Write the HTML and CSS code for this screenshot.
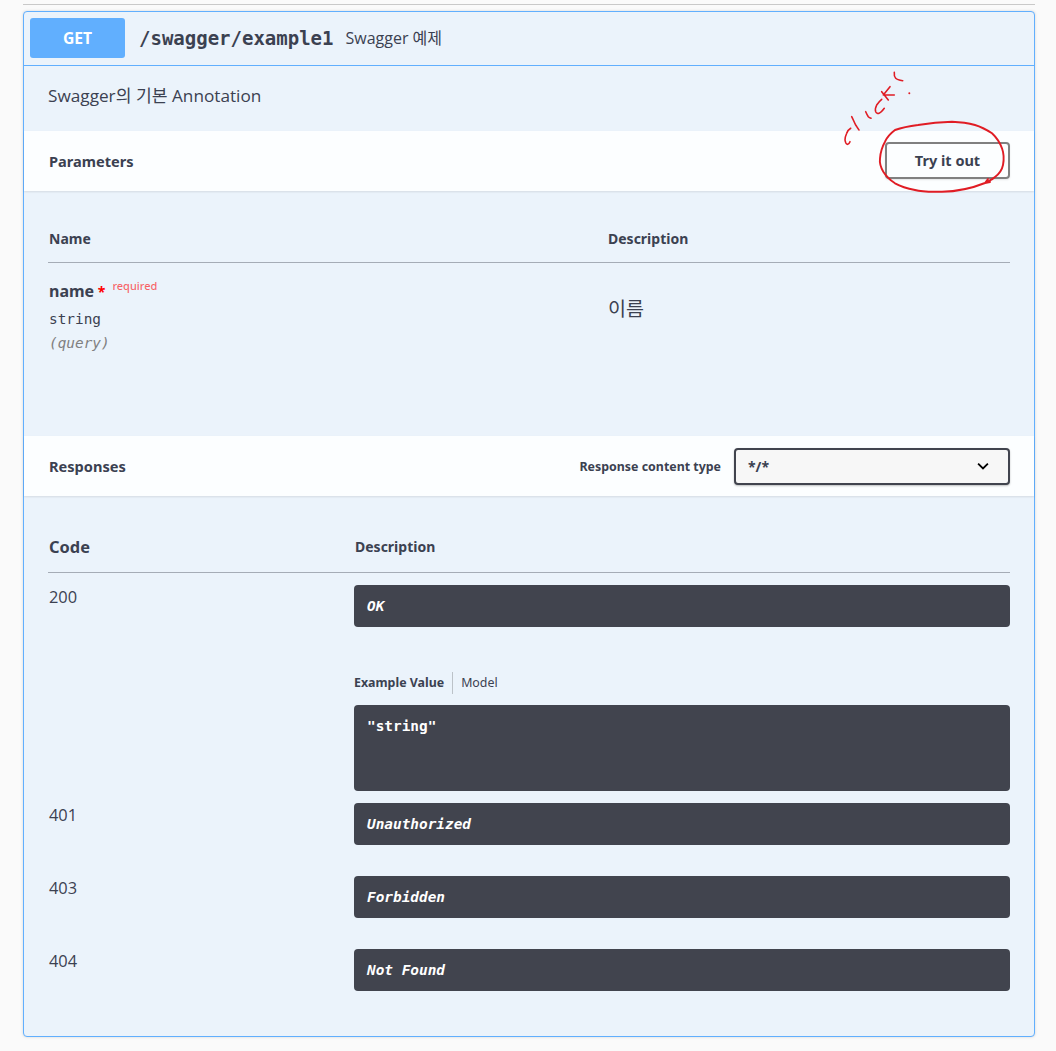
FILE: index.html
```html
<!DOCTYPE html>
<html lang="en">
<head>
  <meta charset="UTF-8" />
  <title>Swagger UI</title>
  <link rel="stylesheet" href="styles.css">
</head>
<body>
  <div class="top-line"></div>

  <div class="opblock">
    <!-- Summary -->
    <div class="summary">
      <span class="method">GET</span>
      <span class="path">/swagger/example1</span>
      <span class="summary-desc">Swagger 예제</span>
    </div>

    <div class="op-desc">Swagger의 기본 Annotation</div>

    <!-- Parameters -->
    <div class="section-head head-params">
      <h4>Parameters</h4>
      <button class="btn-try">Try it out</button>
    </div>

    <div class="params">
      <div class="param-cols">
        <div class="col-name">Name</div>
        <div class="col-desc">Description</div>
      </div>
      <div class="param-row">
        <div class="col-name">
          <div class="param-name">name<span class="star"> *</span><span class="req">required</span></div>
          <div class="param-type">string</div>
          <div class="param-in">(query)</div>
        </div>
        <div class="col-desc param-text">이름</div>
      </div>
    </div>

    <!-- Responses -->
    <div class="section-head head-resp">
      <h4>Responses</h4>
      <label class="content-type">
        <span>Response content type</span>
        <span class="select">
          <span>*/*</span>
          <svg width="14" height="14" viewBox="0 0 20 20"><path d="M3 6.5 L10 13.5 L17 6.5" fill="none" stroke="#000" stroke-width="2.6"/></svg>
        </span>
      </label>
    </div>

    <div class="responses">
      <div class="resp-cols">
        <div class="col-code">Code</div>
        <div class="col-resp">Description</div>
      </div>

      <div class="resp-row first">
        <div class="col-code code">200</div>
        <div class="col-resp">
          <div class="msg">OK</div>
          <div class="tabs">
            <span class="tab active">Example Value</span>
            <span class="tab">Model</span>
          </div>
          <pre class="example">"string"</pre>
        </div>
      </div>

      <div class="resp-row">
        <div class="col-code code">401</div>
        <div class="col-resp"><div class="msg">Unauthorized</div></div>
      </div>
      <div class="resp-row">
        <div class="col-code code">403</div>
        <div class="col-resp"><div class="msg">Forbidden</div></div>
      </div>
      <div class="resp-row">
        <div class="col-code code">404</div>
        <div class="col-resp"><div class="msg">Not Found</div></div>
      </div>
    </div>
  </div>

  <!-- Red pen notes on top of the page -->
  <svg class="scribble" width="1056" height="1051" viewBox="0 0 1056 1051">
    <g fill="none" stroke="#e01c24" stroke-linecap="round" stroke-linejoin="round">
      <path stroke-width="1.9" d="M985 183 C975 187 960 191.5 942 191.7 C930 192 920 191.5 915 190 C905 188 900 186 895 183.3 C890 180 886 176 883.3 171.7 C880 166 879.5 162 880 158.3 C880.5 152 882 147 885 141.7 C887 137 891 133 895 130 C902 127.5 910 126 918 125 C930 123 940 122 952 121.7 C960 122 968 123 975 125 C982 127 987 130 992 133.3 C997 138 1000 143 1002 148.3 C1004 154 1004 160 1003 165 C1002 170 999 174 995 177 C992 180 988 181 985 183 L988 179 M985 183 L990 182"/>
      <path stroke-width="1.6" d="M850.7 128.3 C848 130 847 132 846.7 133.3 C845.5 136 844.7 138 845 140 C845.3 142 846 144 847.3 144.3 C848.5 144.5 849.5 143 850 141.7"/>
      <path stroke-width="1.6" d="M851.7 116.7 C853 119 854 122 855.7 125 C857 127 858 129 859 130"/>
      <path stroke-width="1.6" d="M865.7 111.7 C866.5 113.5 867.5 115.5 868.3 116.7 C869 117.5 870 118 871 118.3"/>
      <path stroke-width="1.6" d="M881.7 99.3 C879.5 101 878 103 876.7 105 C875.5 107.5 875 110 875.7 111.7 C876.5 113.5 878 113.8 879 113.3 C881 112.5 883 110 884.3 108.3"/>
      <path stroke-width="1.6" d="M881.7 91.7 L888.3 100 M890 86.7 L883.3 95 L894.3 95"/>
      <path stroke-width="1.6" d="M894.3 72.3 C894 75 894.5 77 895.7 78.3 C897 79.7 900 80.3 902.7 80.7"/>
      <circle cx="909.3" cy="93.3" r="1" fill="#e01c24" stroke="none"/>
    </g>
  </svg>
</body>
</html>
```

FILE: styles.css
```css
* { margin: 0; padding: 0; box-sizing: border-box; }

html, body {
  background: #fafafa;
  font-family: 'Open Sans', 'Noto Sans CJK KR', sans-serif;
  color: #3b4151;
}

body {
  position: relative;
  width: 1056px;
  height: 1051px;
  overflow: hidden;
  padding: 4px 21px 0 23px;
}

.top-line {
  height: 1px;
  background: #c9c9c9;
  margin-bottom: 6px;
}

.opblock {
  height: 1026px;
  background: #ebf3fb;
  border: 1px solid #61affe;
  border-radius: 4px;
  box-shadow: 0 0 3px rgba(0, 0, 0, 0.15);
}

.summary {
  height: 54px;
  display: flex;
  align-items: flex-start;
  padding: 6px 6px 0;
  border-bottom: 1px solid #61affe;
}

.method {
  width: 95px;
  height: 40px;
  background: #61affe;
  border-radius: 3px;
  color: #fff;
  font: 700 15.7px 'Noto Sans', sans-serif;
  display: flex;
  align-items: center;
  justify-content: center;
}

.path {
  margin-left: 14px;
  font: 700 19px/40px 'DejaVu Sans Mono', monospace;
}

.summary-desc {
  margin-left: 12px;
  font-size: 16px;
  line-height: 41px;
}

.op-desc {
  height: 65px;
  padding: 16px 24px 0;
  font-size: 17.2px;
}

.section-head {
  height: 60px;
  display: flex;
  align-items: center;
  justify-content: space-between;
  padding: 0 24px;
  background: rgba(255, 255, 255, 0.85);
  box-shadow: 0 1px 2px rgba(0, 0, 0, 0.1);
}

.section-head h4 {
  margin-left: 1px;
  font: 700 14.6px 'Noto Sans', sans-serif;
}

.btn-try {
  width: 125px;
  height: 37px;
  margin-top: -1px;
  padding-bottom: 2px;
  background: transparent;
  border: 2px solid #808080;
  border-radius: 4px;
  color: #3b4151;
  font: 700 14.5px 'Noto Sans', sans-serif;
  box-shadow: 0 1px 2px rgba(0, 0, 0, 0.1);
}

.params {
  height: 245px;
  padding: 0 24px;
}

.param-cols {
  height: 72px;
  display: flex;
  align-items: flex-end;
  padding-bottom: 14px;
  border-bottom: 1px solid rgba(59, 65, 81, 0.4);
  font: 700 14px 'Noto Sans', sans-serif;
}

.col-name {
  width: 560px;
  padding-left: 1px;
}

.param-row {
  display: flex;
  padding-top: 17px;
}

.param-name {
  font: 700 16px 'Noto Sans', sans-serif;
}

.star { color: #f00; font-size: 14px; }

.req {
  position: relative;
  top: -7px;
  margin-left: 7px;
  font-size: 11px;
  font-weight: 500;
  color: rgba(255, 0, 0, 0.6);
}

.param-type {
  margin-top: 9px;
  font: 400 14.4px 'DejaVu Sans Mono', monospace;
}

.param-in {
  margin-top: 8px;
  font: italic 400 14.4px 'DejaVu Sans Mono', monospace;
  color: #808080;
}

.param-text {
  padding-top: 13px;
  font-size: 19.6px;
}

.select {
  width: 276px;
  height: 37px;
  background: #f7f7f7;
  border: 2px solid #41444e;
  border-radius: 4px;
  box-shadow: 0 1px 2px rgba(0, 0, 0, 0.25);
  display: flex;
  align-items: center;
  justify-content: space-between;
  padding: 0 18px 0 12px;
  font: 700 14px 'Noto Sans', sans-serif;
}

.content-type {
  display: flex;
  align-items: center;
  gap: 13px;
  font: 700 12.4px 'Noto Sans', sans-serif;
}

.responses {
  padding: 0 24px;
}

.resp-cols {
  height: 77px;
  display: flex;
  align-items: flex-end;
  padding-bottom: 15px;
  border-bottom: 1px solid rgba(59, 65, 81, 0.4);
  font: 700 14px 'Noto Sans', sans-serif;
}

.resp-cols .col-code {
  font-size: 16.4px;
  margin-bottom: -1px;
}

.col-code {
  width: 306px;
  padding-left: 1px;
}

.col-resp { flex: 1; }

.resp-cols .col-resp {
  padding-left: 1px;
  margin-bottom: 1px;
}

.code { font-size: 16.4px; }

.resp-row {
  display: flex;
  padding-top: 12px;
  height: 73px;
}

.resp-row.first { height: 218px; }

.msg {
  height: 42px;
  background: #41444e;
  border-radius: 4px;
  color: #fff;
  font: italic 700 14.4px 'DejaVu Sans Mono', monospace;
  padding: 13px 13px 0;
}

.tabs {
  margin-top: 45px;
  height: 22px;
  display: flex;
  align-items: center;
  font: 12.4px 'Noto Sans', sans-serif;
}

.tab { padding: 0 8px; line-height: 22px; }

.tab.active {
  font-weight: 700;
  padding-left: 0;
  border-right: 1px solid rgba(0, 0, 0, 0.2);
}

.example {
  margin-top: 11px;
  height: 86px;
  background: #41444e;
  border-radius: 4px;
  color: #fff;
  font: 700 14.4px 'DejaVu Sans Mono', monospace;
  padding: 13px 13px 0;
}

.scribble {
  position: absolute;
  left: 0;
  top: 0;
  pointer-events: none;
}
```
